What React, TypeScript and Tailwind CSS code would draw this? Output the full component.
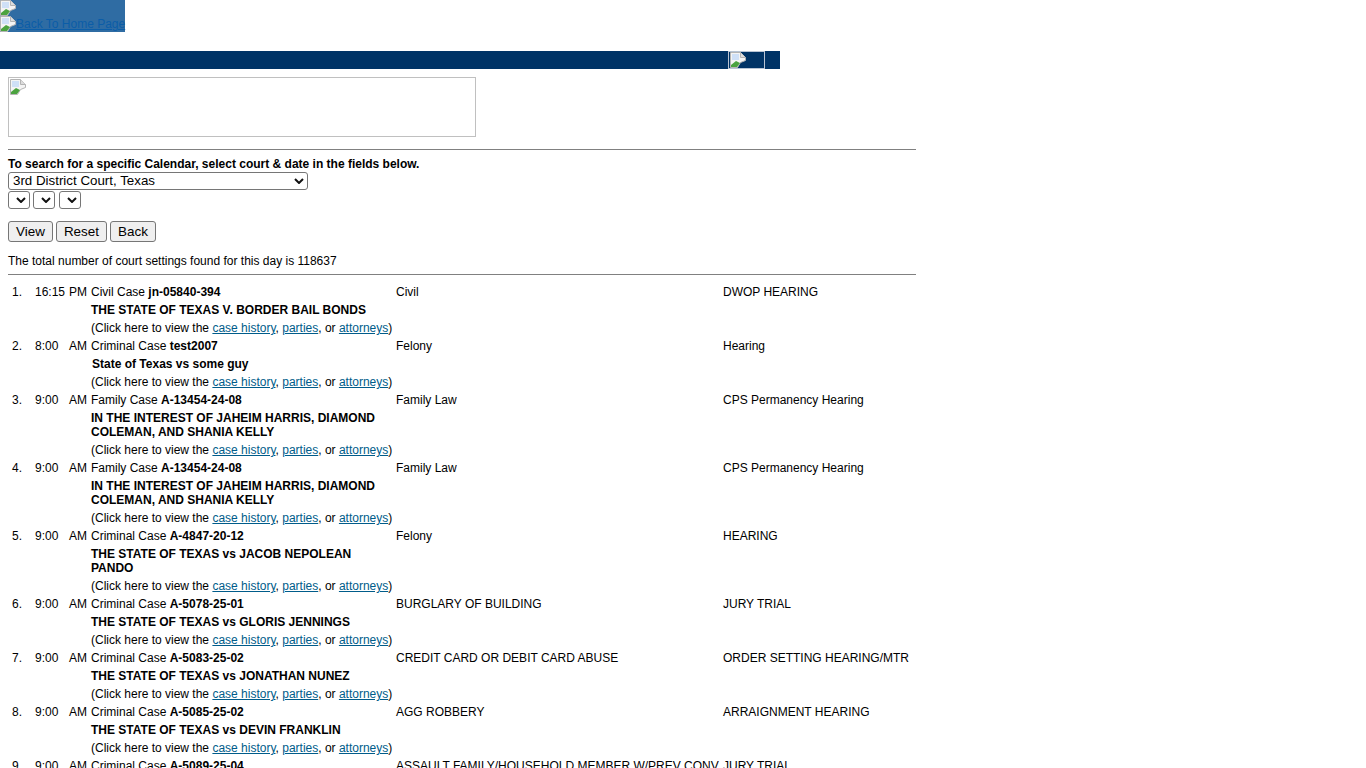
const font = { fontFamily: '"Liberation Sans", Arial, sans-serif' }

type Setting = {
  time: string
  ampm: string
  kind: string
  no: string
  title: string
  charge: string
  hearing: string
  indent?: boolean
}

const settings: Setting[] = [
  { time: '16:15', ampm: 'PM', kind: 'Civil Case', no: 'jn-05840-394', title: 'THE STATE OF TEXAS V. BORDER BAIL BONDS', charge: 'Civil', hearing: 'DWOP HEARING' },
  { time: '8:00', ampm: 'AM', kind: 'Criminal Case', no: 'test2007', title: 'State of Texas vs some guy', charge: 'Felony', hearing: 'Hearing', indent: true },
  { time: '9:00', ampm: 'AM', kind: 'Family Case', no: 'A-13454-24-08', title: 'IN THE INTEREST OF JAHEIM HARRIS, DIAMOND COLEMAN, AND SHANIA KELLY', charge: 'Family Law', hearing: 'CPS Permanency Hearing' },
  { time: '9:00', ampm: 'AM', kind: 'Family Case', no: 'A-13454-24-08', title: 'IN THE INTEREST OF JAHEIM HARRIS, DIAMOND COLEMAN, AND SHANIA KELLY', charge: 'Family Law', hearing: 'CPS Permanency Hearing' },
  { time: '9:00', ampm: 'AM', kind: 'Criminal Case', no: 'A-4847-20-12', title: 'THE STATE OF TEXAS vs JACOB NEPOLEAN PANDO', charge: 'Felony', hearing: 'HEARING' },
  { time: '9:00', ampm: 'AM', kind: 'Criminal Case', no: 'A-5078-25-01', title: 'THE STATE OF TEXAS vs GLORIS JENNINGS', charge: 'BURGLARY OF BUILDING', hearing: 'JURY TRIAL' },
  { time: '9:00', ampm: 'AM', kind: 'Criminal Case', no: 'A-5083-25-02', title: 'THE STATE OF TEXAS vs JONATHAN NUNEZ', charge: 'CREDIT CARD OR DEBIT CARD ABUSE', hearing: 'ORDER SETTING HEARING/MTR' },
  { time: '9:00', ampm: 'AM', kind: 'Criminal Case', no: 'A-5085-25-02', title: 'THE STATE OF TEXAS vs DEVIN FRANKLIN', charge: 'AGG ROBBERY', hearing: 'ARRAIGNMENT HEARING' },
  { time: '9:00', ampm: 'AM', kind: 'Criminal Case', no: 'A-5089-25-04', title: 'THE STATE OF TEXAS', charge: 'ASSAULT FAMILY/HOUSEHOLD MEMBER W/PREV CONV', hearing: 'JURY TRIAL' },
]

// chrome's broken image glyph
function BrokenImage() {
  return (
    <svg width="16" height="16" viewBox="0 0 16 16" className="block shrink-0">
      <path d="M0.5 0.5h10l5 5v3l-5 2-3 5h-7z" fill="#f4f4f4" stroke="#b4b4b4" />
      <path d="M10.5 0.5v5h5" fill="#dcdcdc" stroke="#b4b4b4" />
      <path d="M2 2h7v6H2z" fill="#cfe0f7" />
      <path d="M1 15v-2l5-4 4 2-3 4z" fill="#4ba33f" />
    </svg>
  )
}

function Dropdown({ label, width }: { label?: string; width: string }) {
  return (
    <div className={`flex h-[18px] items-center justify-between rounded-[3px] border border-[#767676] bg-white pl-1 pr-[3px] text-[13.33px] text-black ${width}`}>
      <span>{label}</span>
      <svg width="10" height="6" viewBox="0 0 10 6"><path d="M1 1l4 4 4-4" fill="none" stroke="#111" strokeWidth="2" /></svg>
    </div>
  )
}

function Btn({ label }: { label: string }) {
  return (
    <button className="h-[21px] rounded-[3px] border border-[#767676] bg-[#efefef] px-[7px] text-[13.45px] leading-none text-black">
      {label}
    </button>
  )
}

function CaseLink({ label }: { label: string }) {
  return <a href="#" className="text-[#005c8a] underline">{label}</a>
}

export default function App() {
  return (
    <div className="h-[768px] overflow-hidden bg-white text-[12px] leading-[14px] text-black" style={font}>
      <div className="h-[32px] w-[125px] bg-[#2f6ca3]">
        <BrokenImage />
        <a href="#" className="flex whitespace-nowrap text-[#0b5da8] underline">
          <BrokenImage />
          <span className="text-[12px] leading-4">Back To Home Page</span>
        </a>
      </div>

      <div className="mt-[19px] flex h-[18px] w-[780px] justify-end bg-[#003366] pr-[15px]">
        <div className="h-[18px] w-[37px] border border-[#b8c4d4] pl-px">
          <BrokenImage />
        </div>
      </div>

      <div className="px-2 pt-2">
        <div className="h-[60px] w-[468px] border border-[#c0c0c0] pl-px pt-px">
          <BrokenImage />
        </div>

        <div className="w-[908px]">
          <hr className="mt-3 border-t border-[#808080]" />
          <div className="mt-[7px] font-bold">To search for a specific Calendar, select court &amp; date in the fields below.</div>
          <div className="mt-px">
            <Dropdown label="3rd District Court, Texas" width="w-[300px]" />
          </div>
          <div className="mt-px flex gap-[3.4px]">
            <Dropdown width="w-[22px]" />
            <Dropdown width="w-[22px]" />
            <Dropdown width="w-[22px]" />
          </div>
          <div className="mt-[12px] flex gap-[3px]">
            <Btn label="View" />
            <Btn label="Reset" />
            <Btn label="Back" />
          </div>
          <div className="mt-[12px]">The total number of court settings found for this day is 118637</div>
          <hr className="mt-[6px] border-t border-[#808080]" />

          <table className="mt-2 w-[908px] table-fixed border-collapse">
            <colgroup>
              <col className="w-[27px]" />
              <col className="w-[34px]" />
              <col className="w-[22px]" />
              <col className="w-[305px]" />
              <col className="w-[327px]" />
              <col />
            </colgroup>
            <tbody>
              {settings.map((s, i) => (
                <tr key={i} className="align-top">
                  <td className="px-1 py-0.5">{i + 1}.</td>
                  <td className="py-0.5">{s.time}</td>
                  <td className="py-0.5">{s.ampm}</td>
                  <td className="py-0.5">
                    <div>{s.kind} <b>{s.no}</b></div>
                    <div className={`mt-1 font-bold ${s.indent ? 'pl-px' : ''}`}>{s.title}</div>
                    <div className="mt-1 whitespace-nowrap">
                      (Click here to view the <CaseLink label="case history" />, <CaseLink label="parties" />, or <CaseLink label="attorneys" />)
                    </div>
                  </td>
                  <td className="py-0.5 whitespace-nowrap">{s.charge}</td>
                  <td className="py-0.5 whitespace-nowrap">{s.hearing}</td>
                </tr>
              ))}
            </tbody>
          </table>
        </div>
      </div>
    </div>
  )
}
